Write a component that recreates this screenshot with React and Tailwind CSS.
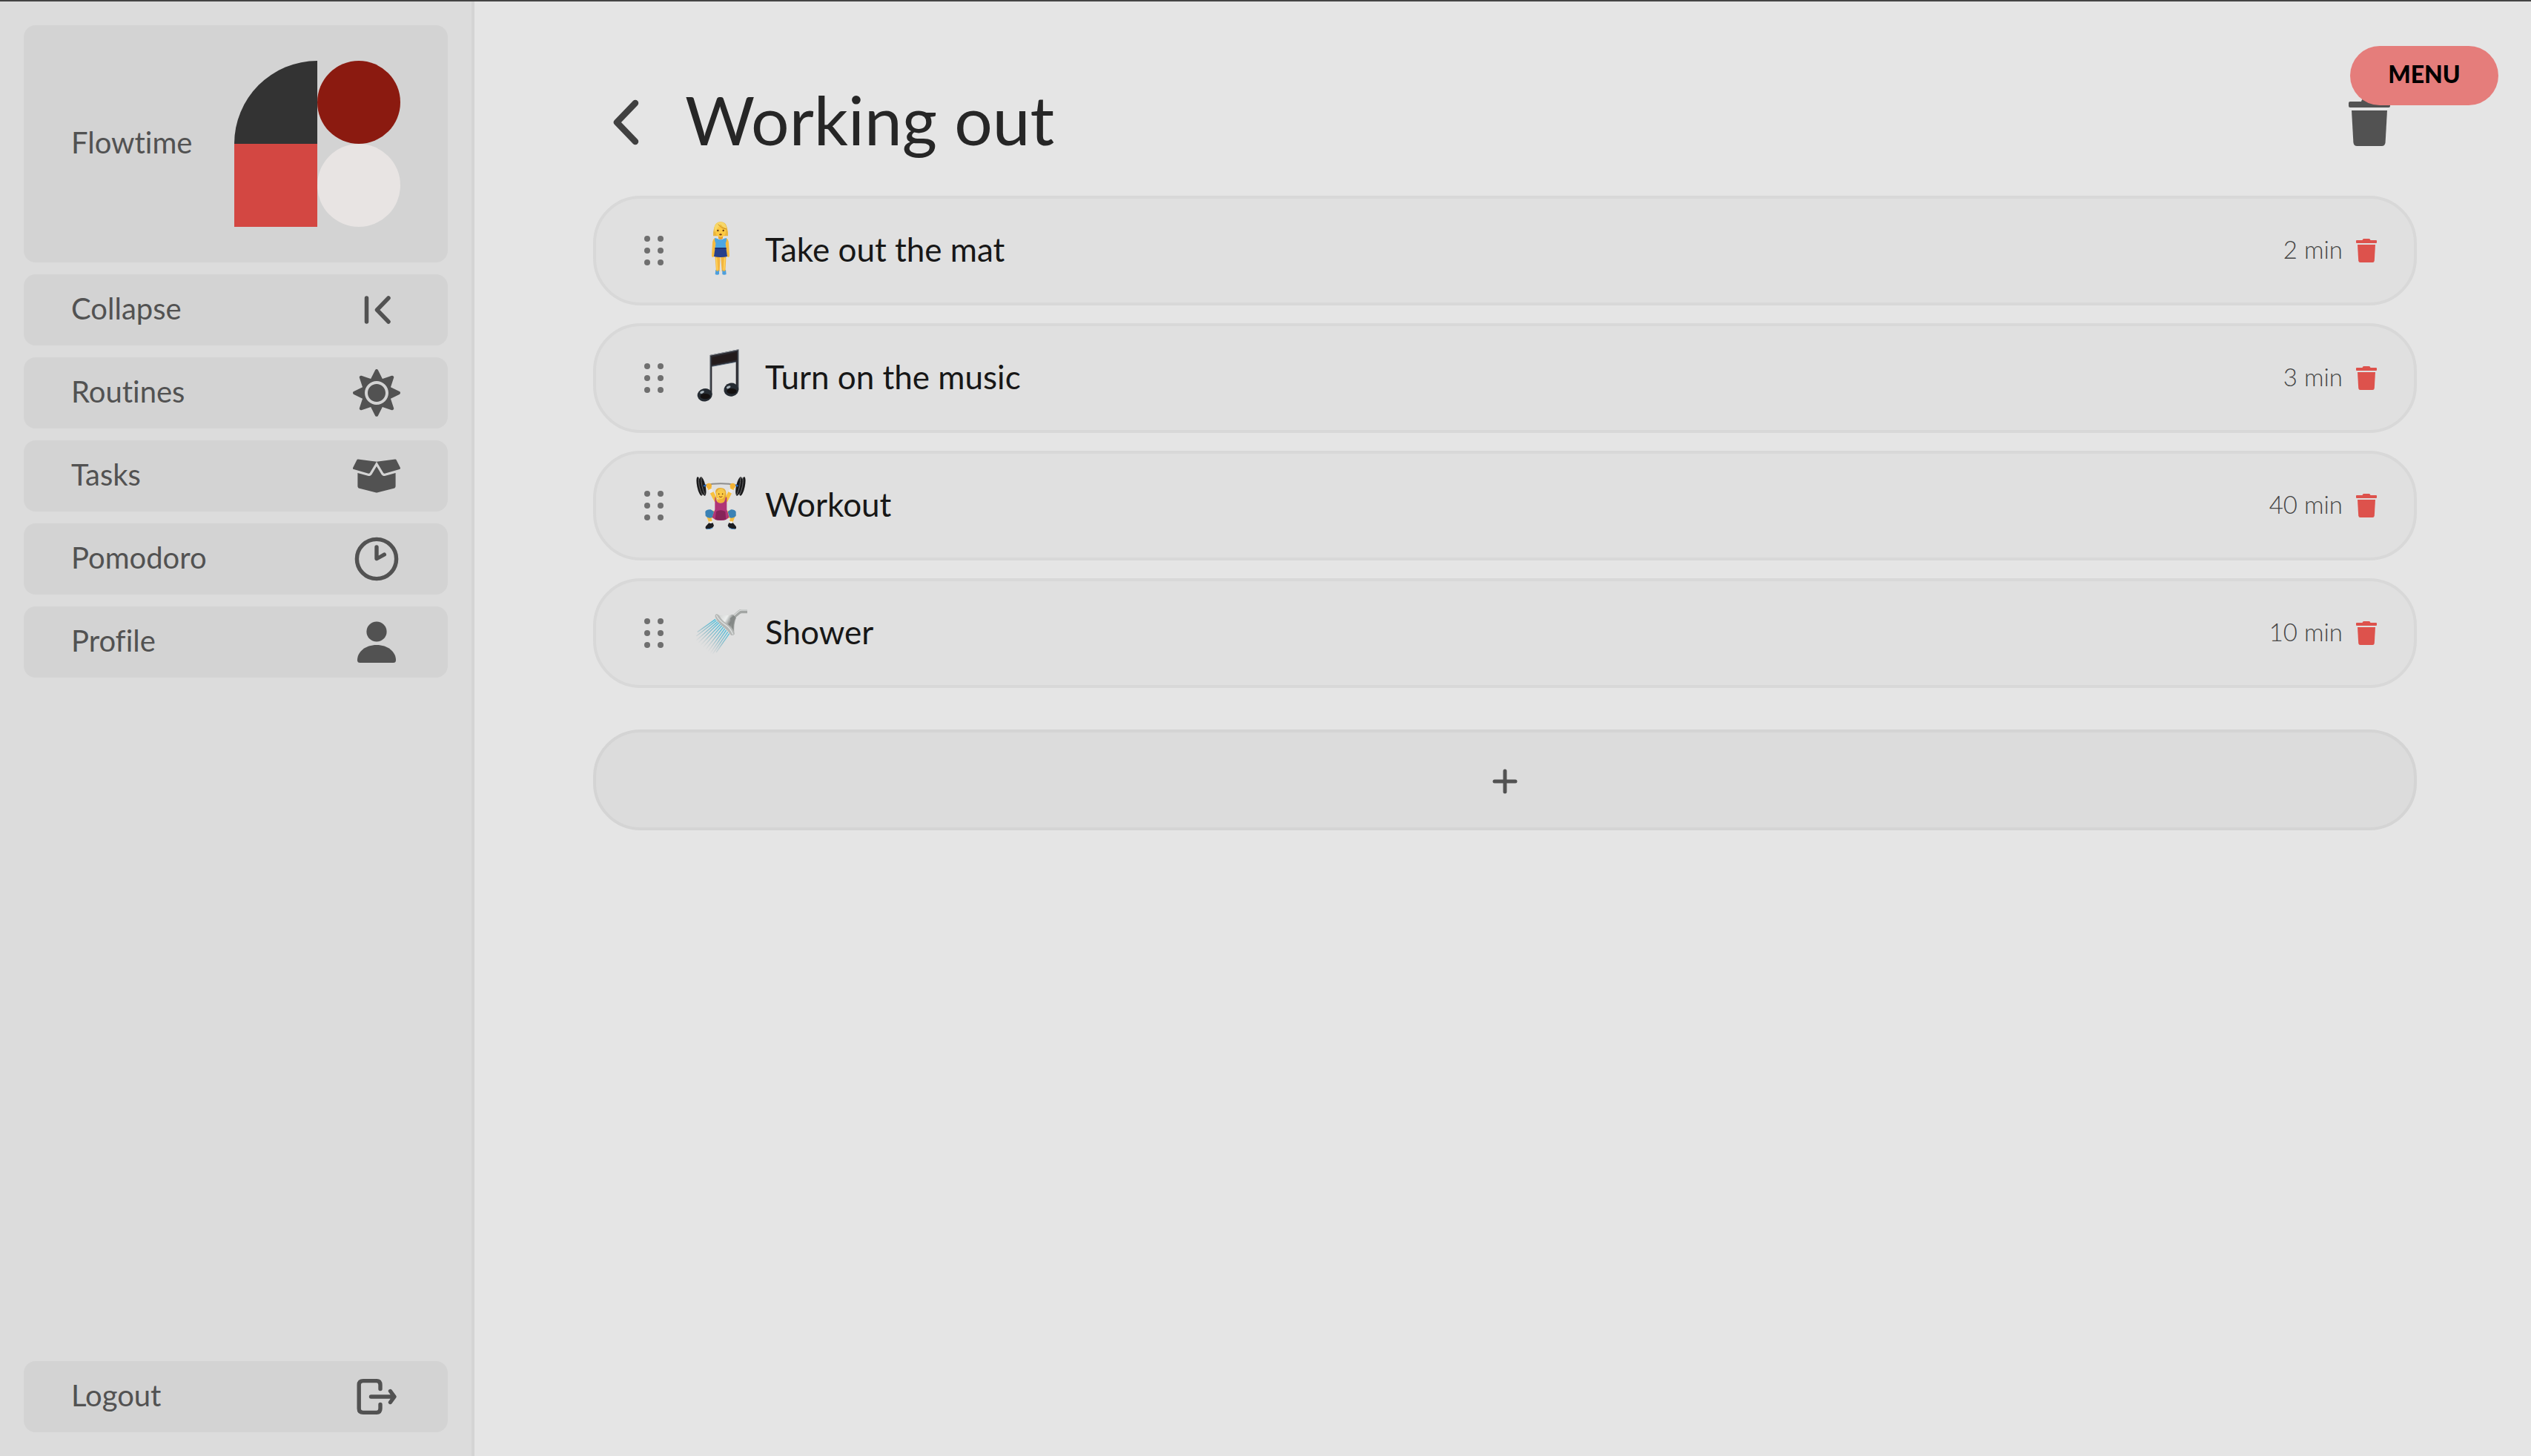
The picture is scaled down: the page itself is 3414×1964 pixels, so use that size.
import React from "react";
import { FaSun, FaBoxOpen } from "react-icons/fa";

function Logo() {
  return (
    <svg viewBox="0 0 224 224" className="size-56 shrink-0" role="img" aria-label="Flowtime logo">
      <path d="M0 112A112 112 0 0 1 112 0V112Z" fill="#333333" />
      <circle cx="168" cy="56" r="56" fill="#8b1a10" />
      <rect y="112" width="112" height="112" fill="#d34742" />
      <circle cx="168" cy="168" r="56" fill="#e8e4e3" />
    </svg>
  );
}

function CollapseIcon() {
  return (
    <svg viewBox="0 0 64 64" className="size-16" fill="none" stroke="currentColor" strokeWidth="5.5" strokeLinecap="round" strokeLinejoin="round" aria-hidden="true">
      <path d="M18.5 16V48M48 16L32.5 32L48 48" />
    </svg>
  );
}

function ClockIcon() {
  return (
    <svg viewBox="0 0 64 64" className="size-16" aria-hidden="true">
      <circle cx="32" cy="32" r="26.6" fill="none" stroke="currentColor" strokeWidth="5.4" />
      <path d="M29.3 16a2.7 2.7 0 0 1 5.4 0V27.4L41 23.8a2.7 2.7 0 0 1 3.2 4.3L33.2 34a2.7 2.7 0 0 1-3.9-2.2Z" fill="currentColor" />
    </svg>
  );
}

function PersonIcon() {
  return (
    <svg viewBox="0 0 64 64" className="size-16" fill="currentColor" aria-hidden="true">
      <circle cx="32" cy="18" r="13.6" />
      <path d="M32 36C17 36 6 45 6 56.500Q6 60 9.500 60H54.500Q58 60 58 56.500C58 45 47 36 32 36Z" />
    </svg>
  );
}

function LogoutIcon() {
  return (
    <svg viewBox="0 0 64 64" className="size-16" fill="none" stroke="currentColor" strokeWidth="5.4" strokeLinecap="round" strokeLinejoin="round" aria-hidden="true">
      <path d="M37 21.500V16Q37 10.600 31.600 10.600H14Q8.200 10.600 8.200 16V48Q8.200 53.400 14 53.400H31.600Q37 53.400 37 48V42.500" />
      <path d="M24.500 32H54M50.500 24.500L56 32L50.500 39.500" />
    </svg>
  );
}

function TrashIcon({ className }) {
  return (
    <svg viewBox="0 0 28 32" className={className} fill="currentColor" aria-hidden="true">
      <path d="M10.500 0H17.500Q19 0 19.500 2H27Q28 2 28 3V5Q28 6 27 6H1Q0 6 0 5V3Q0 2 1 2H8.500Q9 0 10.500 0Z" />
      <path d="M2 8H26L24.800 29.500Q24.600 32 22.300 32H5.700Q3.400 32 3.200 29.500Z" />
    </svg>
  );
}

function GripIcon() {
  const rows = [7, 23, 39];
  return (
    <svg viewBox="0 0 28 46" className="w-7 shrink-0 text-[#6f6f6f]" fill="currentColor" aria-hidden="true">
      {rows.map((y) => (
        <g key={y}>
          <circle cx="5" cy={y} r="4" />
          <circle cx="23" cy={y} r="4" />
        </g>
      ))}
    </svg>
  );
}

function StandingArt() {
  return (
    <>
      <path d="M115 160H137L134 228H120ZM138 160H161L157 228H143Z" fill="#f3b53d" />
      <path d="M121 172L125 228M155 172L151 228" stroke="#ffd45c" strokeWidth="5" fill="none" />
      <path d="M118 222H132V240Q124 245 116 240ZM145 222H159L161 240Q152 245 145 240Z" fill="#4d9fdc" />
      <path d="M118 222Q125 234 132 222ZM145 222Q152 234 159 222Z" fill="#f3b53d" />
      <path d="M115 94Q106 97 105 115L102 165Q103 172 108 171L113 165L120 115ZM160 94Q170 97 171 115L174 165Q173 172 168 171L163 165L156 115Z" fill="#f5bb3f" />
      <path d="M114 93L124 95Q138 104 152 95L162 93Q163 106 158 114L160 134H116L118 114Q113 104 114 93Z" fill="#4da6e2" />
      <path d="M129 84H147V95Q138 103 129 95Z" fill="#e8a02c" />
      <path d="M116 132H160L165 168Q138 174 111 168Z" fill="#27408b" />
      <path d="M116 132H160L161 138H115Z" fill="#1f3475" />
      <path d="M138 28Q160 29 164 50Q169 68 168 85H108Q107 68 112 50Q117 29 138 28Z" fill="#eab53c" />
      <path d="M117 60Q118 46 134 40Q146 54 159 57Q162 88 138 90Q116 88 117 60Z" fill="#fdca43" />
      <path d="M112 52Q116 30 138 28Q158 29 163 54Q148 52 138 38Q126 50 114 70Z" fill="#f7d768" />
      <path d="M128 38Q142 56 161 57" stroke="#c98d23" strokeWidth="3" fill="none" />
      <circle cx="127" cy="63" r="3.500" fill="#5a2f12" />
      <circle cx="149" cy="63" r="3.500" fill="#5a2f12" />
      <ellipse cx="138" cy="79" rx="5" ry="3.500" fill="#7b3a1b" />
    </>
  );
}

function MusicArt() {
  return (
    <>
      <path d="M95 51L211 28V192H200V79L103 97V212H95Z" fill="#2b2a30" />
      <path d="M103 60L204 38V70L103 90Z" fill="#231b1c" />
      <path d="M95 52L211 29" stroke="#8d949c" strokeWidth="3" />
      <path d="M103 97L200 79" stroke="#52687c" strokeWidth="2.500" />
      <path d="M97 55V205M209 34V185" stroke="#5c6a76" strokeWidth="2" />
      <ellipse cx="74" cy="212" rx="30" ry="26" fill="#252b32" transform="rotate(-12 74 212)" />
      <ellipse cx="181" cy="191" rx="30" ry="27" fill="#252b32" transform="rotate(-12 181 191)" />
      <ellipse cx="76" cy="218" rx="20" ry="11" fill="#141010" />
      <ellipse cx="183" cy="197" rx="20" ry="11" fill="#141010" />
      <ellipse cx="63" cy="201" rx="9" ry="5" fill="#aab5bd" transform="rotate(-25 63 201)" />
      <ellipse cx="170" cy="181" rx="9" ry="5" fill="#aab5bd" transform="rotate(-25 170 181)" />
    </>
  );
}

function WorkoutArt() {
  return (
    <>
      <path d="M72 62Q138 48 206 62" stroke="#8d8d8d" strokeWidth="6" fill="none" />
      <path d="M92 72L121 126M186 72L158 126" stroke="#f8c03e" strokeWidth="15" fill="none" />
      <path d="M95 78L102 91M183 78L176 91" stroke="#e9e9ee" strokeWidth="17" fill="none" />
      <circle cx="91" cy="64" r="11" fill="#f3b233" />
      <circle cx="187" cy="64" r="11" fill="#f3b233" />
      <g fill="#1a1a1b">
        <ellipse cx="53" cy="66" rx="10" ry="39" transform="rotate(-12 53 66)" />
        <ellipse cx="66" cy="66" rx="11" ry="39" transform="rotate(-12 66 66)" />
        <ellipse cx="226" cy="66" rx="10" ry="39" transform="rotate(12 226 66)" />
        <ellipse cx="212" cy="66" rx="11" ry="39" transform="rotate(12 212 66)" />
      </g>
      <g stroke="#69696b" strokeWidth="3" fill="none">
        <path d="M50 30Q46 64 64 102M60 29Q58 64 75 101M228 30Q232 64 214 102M218 29Q220 64 203 101" />
      </g>
      <path d="M69 65L79 62M209 65L199 62" stroke="#2763b3" strokeWidth="7" />
      <path d="M117 88Q118 72 138 72Q158 72 160 90L161 126H152L122 112Z" fill="#e5aa35" />
      <path d="M121 90Q138 70 155 90Q156 118 138 120Q120 118 121 90Z" fill="#fccb45" />
      <path d="M119 94Q126 76 140 75Q152 76 158 94Q146 91 138 83Q130 91 119 94Z" fill="#f3c84e" />
      <circle cx="131" cy="97" r="2.500" fill="#5a2f12" />
      <circle cx="146" cy="97" r="2.500" fill="#5a2f12" />
      <path d="M132 107Q138 113 145 107" stroke="#8b3c1d" strokeWidth="3" fill="none" />
      <path d="M128 118H149L158 134H119Z" fill="#f1b137" />
      <path d="M114 184L112 165L88 162L78 180L94 220H106L101 194L118 196ZM164 184L166 165L190 162L200 180L184 220H172L177 194L160 196Z" fill="#f6bd42" />
      <path d="M118 110Q119 133 138 134Q158 133 158 110L163 110V160L172 190Q166 204 138 204Q110 204 104 190L115 160V110Z" fill="#b03477" />
      <path d="M120 168Q138 158 157 168L160 201Q138 206 116 201Z" fill="#852459" />
      <path d="M76 168Q82 158 98 160L111 169L104 192Q88 198 77 186ZM200 168Q194 158 180 160L167 169L174 192Q188 198 200 186Z" fill="#3b82b5" />
      <path d="M92 208H106V219H92ZM172 208H186V219H172Z" fill="#f2f2f4" />
      <path d="M91 214Q98 219 106 213L111 224Q108 238 82 239Q74 237 78 228ZM172 213Q180 219 188 214L200 228Q204 237 196 239Q170 238 167 224Z" fill="#1c1d22" />
      <path d="M82 239Q98 240 106 234M196 239Q180 240 172 234" stroke="#4b8fc9" strokeWidth="3" fill="none" />
    </>
  );
}

function ShowerArt() {
  const jets = [
    [117, 88, 44, 140],
    [121, 93, 40, 156],
    [126, 98, 40, 173],
    [131, 103, 44, 187],
    [137, 109, 50, 200],
    [143, 114, 58, 212],
    [149, 120, 70, 220],
    [155, 126, 82, 226],
    [161, 132, 94, 229],
    [167, 139, 106, 228],
    [173, 146, 120, 222],
  ];
  return (
    <>
      <defs>
        <linearGradient id="jet" gradientUnits="userSpaceOnUse" x1="150" y1="112" x2="72" y2="208">
          <stop offset="0" stopColor="#3fbfe0" />
          <stop offset="0.5" stopColor="#7fb7c6" stopOpacity="0.8" />
          <stop offset="1" stopColor="#a8b4b8" stopOpacity="0" />
        </linearGradient>
        <linearGradient id="chrome" x1="0" y1="0" x2="1" y2="0.6">
          <stop offset="0" stopColor="#c9cbca" />
          <stop offset="0.45" stopColor="#eceeed" />
          <stop offset="0.7" stopColor="#7f8381" />
          <stop offset="1" stopColor="#b8bab9" />
        </linearGradient>
      </defs>
      {jets.map(([a, b, c, d]) => (
        <line key={a} x1={a} y1={b} x2={c} y2={d} stroke="url(#jet)" strokeWidth="4" />
      ))}
      <path d="M246 48H222Q214 48 208 54L188 72L198 82L216 67Q219 64 224 64H246Z" fill="#a3a6a4" />
      <path d="M246 51H222Q215 52 210 57L192 73" stroke="#d9dbda" strokeWidth="4" fill="none" />
      <path d="M122 70Q160 76 186 68L201 82Q190 104 194 150L180 146Z" fill="url(#chrome)" />
      <path d="M176 84Q182 100 184 126L191 138Q188 104 196 84L188 76Z" fill="#858987" />
      <path d="M118 68Q126 64 134 76Q144 94 164 106Q190 124 194 146Q192 156 180 152Q166 130 146 116Q122 96 116 78Q115 71 118 68Z" fill="#b4b7b5" />
      <path d="M121 72Q130 92 156 109Q178 124 188 149" stroke="#dfe1e0" strokeWidth="4" fill="none" />
    </>
  );
}

function Emoji({ label, Art }) {
  return (
    <svg viewBox="30 27 216 216" className="mb-1.5 ml-10 size-18 shrink-0" role="img" aria-label={label}>
      <Art />
    </svg>
  );
}

const NAV = [
  { label: "Routines", icon: <FaSun className="size-16" aria-hidden="true" /> },
  { label: "Tasks", icon: <FaBoxOpen className="size-16" aria-hidden="true" /> },
  { label: "Pomodoro", icon: <ClockIcon /> },
  { label: "Profile", icon: <PersonIcon /> },
];

const STEPS = [
  { name: "Take out the mat", time: "2 min", label: "Woman standing", Art: StandingArt },
  { name: "Turn on the music", time: "3 min", label: "Music notes", Art: MusicArt },
  { name: "Workout", time: "40 min", label: "Woman lifting weights", Art: WorkoutArt },
  { name: "Shower", time: "10 min", label: "Shower head", Art: ShowerArt },
];

const ITEM = "flex h-24 w-full shrink-0 items-center justify-between rounded-2xl bg-[#d3d3d3] px-16";

export default function App() {
  return (
    <div className="flex min-h-screen border-t-2 border-[#444444] bg-[#e5e5e5] font-['Lato',sans-serif] text-[#525252]">
      <aside className="flex w-[640px] shrink-0 flex-col border-r-4 border-[#d4d4d4] bg-[#dcdcdc] p-8 text-[40px] leading-[56px] [font-variant-ligatures:none]">
        <nav className="flex flex-col gap-4">
          <a href="#home" className="flex h-80 items-center justify-between rounded-2xl bg-[#d3d3d3] px-16">
            <span className="pb-1">Flowtime</span>
            <Logo />
          </a>
          <button type="button" className={ITEM}>
            <span className="pb-1">Collapse</span>
            <CollapseIcon />
          </button>
          {NAV.map(({ label, icon }) => (
            <a key={label} href={"#" + label.toLowerCase()} className={ITEM}>
              <span className="pb-1">{label}</span>
              {icon}
            </a>
          ))}
        </nav>
        <div className="mt-auto">
          <button type="button" className={ITEM}>
            <span className="pb-1">Logout</span>
            <LogoutIcon />
          </button>
        </div>
      </aside>

      <main className="min-w-0 flex-1 pt-[99px] pr-[154px] pb-16 pl-40">
        <header className="mb-[35px] flex h-32 items-center pr-9 pl-3">
          <button type="button" aria-label="Back" className="text-[#404040]">
            <svg viewBox="0 0 64 64" className="size-16" fill="none" stroke="currentColor" strokeWidth="8.5" strokeLinecap="round" strokeLinejoin="round" aria-hidden="true">
              <path d="M45 6L20 32L45 58" />
            </svg>
          </button>
          <h1 className="ml-12 pb-2 text-[91px] leading-[120px] text-[#262626]">Working out</h1>
          <button type="button" aria-label="Delete routine" className="ml-auto">
            <TrashIcon className="w-14" />
          </button>
        </header>

        <ul className="flex flex-col gap-6">
          {STEPS.map(({ name, time, label, Art }) => (
            <li key={name} className="flex h-37 items-center rounded-[64px] border-4 border-[#d8d8d8] bg-[#e0e0e0] pr-[50px] pl-16">
              <GripIcon />
              <Emoji label={label} Art={Art} />
              <span className="ml-6 pb-1 text-[44px] leading-[56px] text-[#171717]">{name}</span>
              <span className="ml-auto pb-1 text-[33px] leading-[40px] font-light text-[#454545]">{time}</span>
              <button type="button" aria-label={"Delete " + name} className="ml-[18px] text-[#dd524c]">
                <TrashIcon className="w-7" />
              </button>
            </li>
          ))}
        </ul>

        <button type="button" aria-label="Add step" className="mt-14 flex h-34 w-full items-center justify-center rounded-[64px] border-4 border-[#d4d4d4] bg-[#dcdcdc] pt-1">
          <svg viewBox="0 0 34 34" className="size-[34px]" fill="none" stroke="currentColor" strokeWidth="5" strokeLinecap="round" aria-hidden="true">
            <path d="M17 3V31M3 17H31" />
          </svg>
        </button>
      </main>

      <button type="button" className="fixed top-[62px] right-11 h-20 w-50 rounded-full bg-[#e57d7b] pb-1 text-[32px] leading-[40px] font-black text-black">
        MENU
      </button>
    </div>
  );
}
